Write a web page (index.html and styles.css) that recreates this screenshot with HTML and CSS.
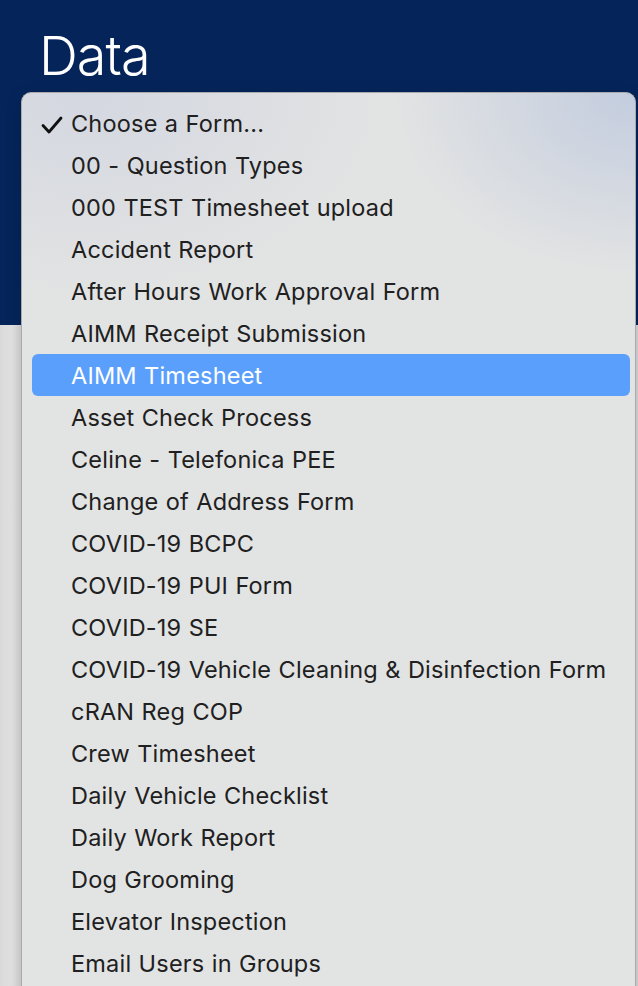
FILE: index.html
```html
<!DOCTYPE html>
<html>
<head>
<meta charset="utf-8">
<link rel="stylesheet" href="styles.css">
</head>
<body>
<div class="page">
  <header class="hero">
    <h1 class="title">Data</h1>
  </header>
  <main class="content"></main>
  <div class="menu">
    <ul class="menu-list">
      <li class="item checked"><svg class="check" viewBox="0 0 22 18" width="22" height="18"><path d="M2 9.5 L8 16 L20 2" fill="none" stroke="#111" stroke-width="2.8" stroke-linecap="round" stroke-linejoin="round"/></svg>Choose a Form...</li>
      <li class="item">00 - Question Types</li>
      <li class="item">000 TEST Timesheet upload</li>
      <li class="item">Accident Report</li>
      <li class="item">After Hours Work Approval Form</li>
      <li class="item">AIMM Receipt Submission</li>
      <li class="item active">AIMM Timesheet</li>
      <li class="item">Asset Check Process</li>
      <li class="item">Celine - Telefonica PEE</li>
      <li class="item">Change of Address Form</li>
      <li class="item">COVID-19 BCPC</li>
      <li class="item">COVID-19 PUI Form</li>
      <li class="item">COVID-19 SE</li>
      <li class="item">COVID-19 Vehicle Cleaning &amp; Disinfection Form</li>
      <li class="item">cRAN Reg COP</li>
      <li class="item">Crew Timesheet</li>
      <li class="item">Daily Vehicle Checklist</li>
      <li class="item">Daily Work Report</li>
      <li class="item">Dog Grooming</li>
      <li class="item">Elevator Inspection</li>
      <li class="item">Email Users in Groups</li>
    </ul>
  </div>
</div>
</body>
</html>
```
FILE: styles.css
```css
html, body {
  margin: 0;
  padding: 0;
  height: 100%;
  overflow: hidden;
}
body {
  font-family: Inter, "Liberation Sans", sans-serif;
  background: #dedede;
}
.page {
  position: relative;
  width: 638px;
  height: 986px;
  overflow: hidden;
}
.hero {
  height: 325px;
  background: #05245a;
  box-sizing: border-box;
  padding: 24px 0 0 39px;
}
.title {
  margin: 0;
  color: #ffffff;
  font-weight: 300;
  font-size: 54px;
  line-height: 64px;
  letter-spacing: -1px;
}
.content {
  height: 661px;
  background: linear-gradient(90deg, #d9d9d9 0, #e2e2e2 12px, #d6d6d6 20px);
}
.menu {
  position: absolute;
  left: 21px;
  top: 92px;
  width: 615px;
  height: 920px;
  box-sizing: border-box;
  border: 1px solid #a9aaac;
  border-radius: 10px;
  background:
    radial-gradient(ellipse 240px 180px at 100% 0%, rgba(190,201,222,0.85), rgba(190,201,222,0) 100%),
    radial-gradient(ellipse 300px 200px at 10% 0%, rgba(210,214,224,0.9), rgba(210,214,224,0) 100%),
    #e2e3e3;
  box-shadow: 0 4px 16px rgba(0,0,0,0.15);
}
.menu-list {
  list-style: none;
  margin: 0;
  padding: 9px 0 0 10px;
}
.item {
  position: relative;
  height: 42px;
  line-height: 44px;
  width: 598px;
  box-sizing: border-box;
  padding-left: 39px;
  font-size: 23.5px;
  letter-spacing: 0.2px;
  word-spacing: 0.5px;
  color: #202020;
  border-radius: 6px;
  white-space: nowrap;
}
.item.active {
  background: #5b9ffc;
  color: #ffffff;
}
.check {
  position: absolute;
  left: 9px;
  top: 14px;
}
```
